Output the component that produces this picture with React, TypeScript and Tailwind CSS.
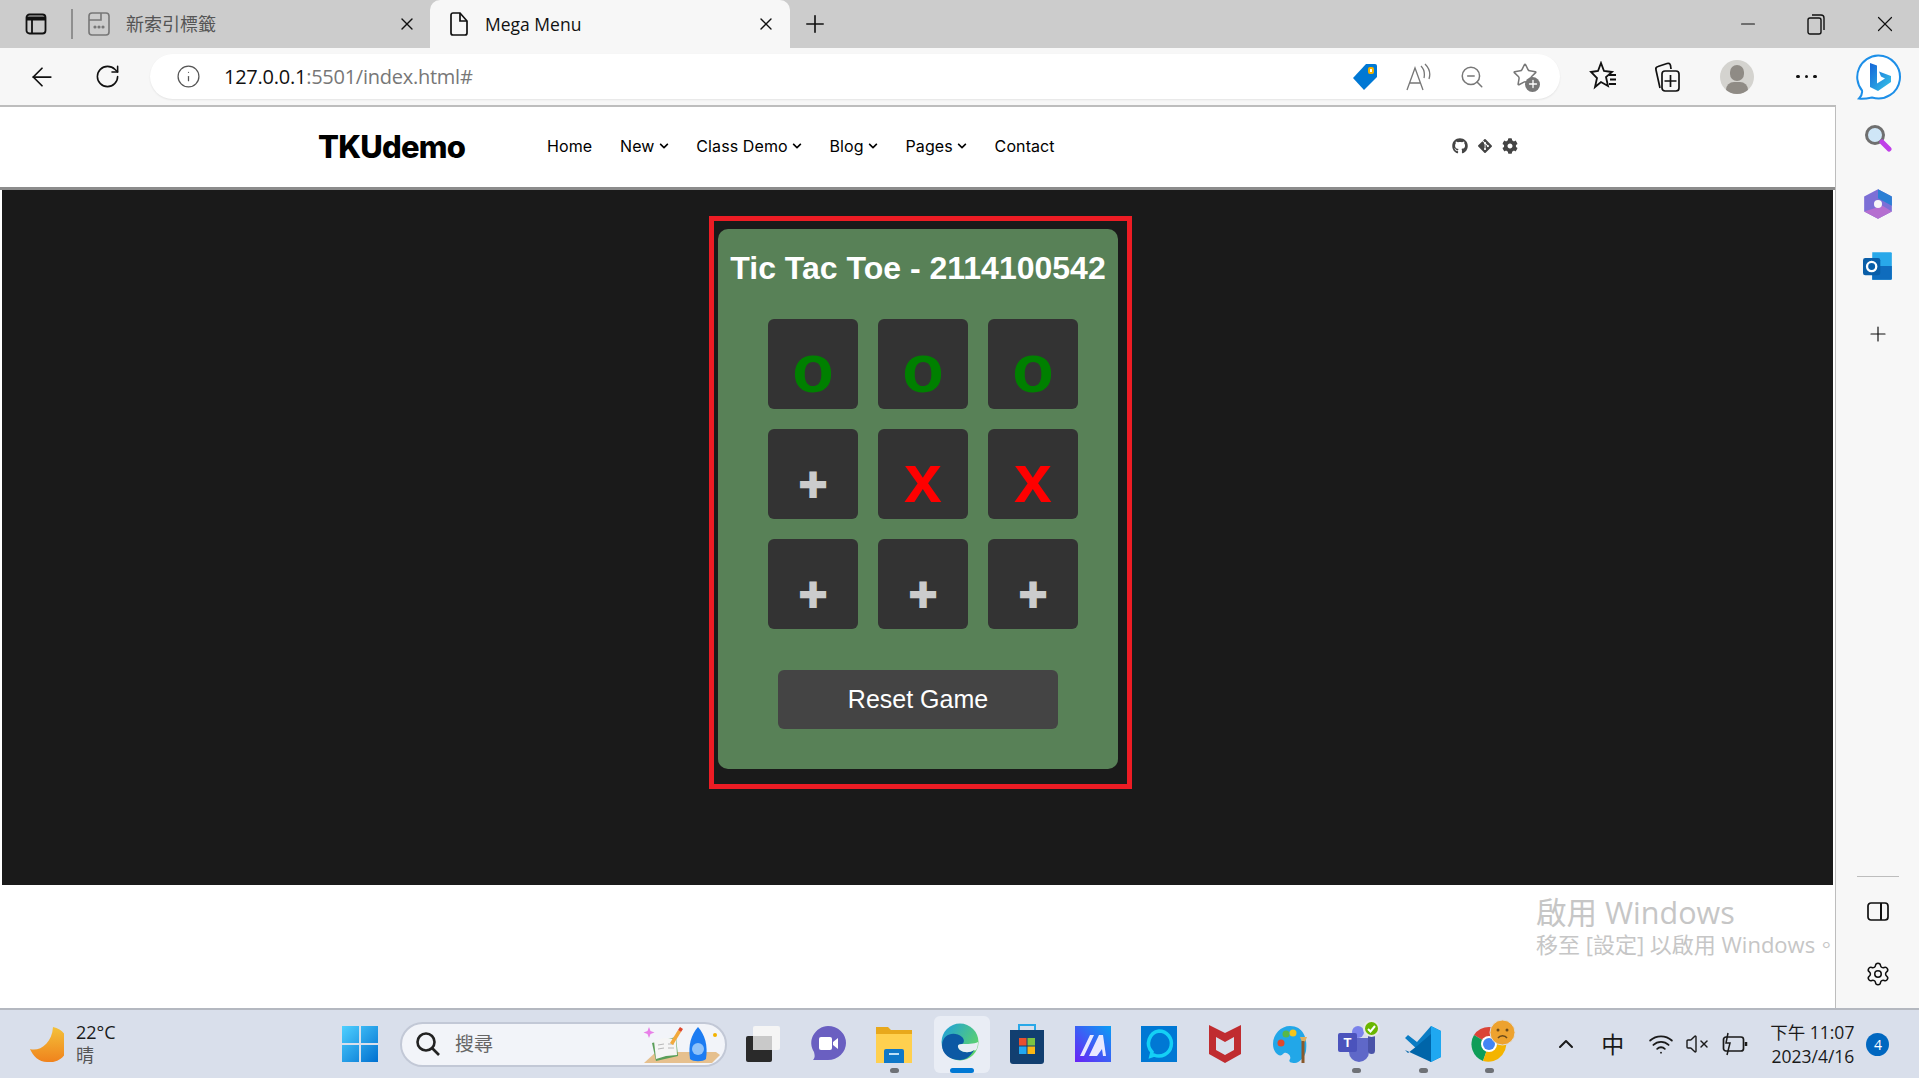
import { ArrowLeft, ChevronUp, Plus, RotateCw, Settings, Star, X, Minus, ZoomOut, Info, Wifi, VolumeX } from 'lucide-react';
import { FaChevronDown, FaCog, FaGitAlt, FaGithub } from 'react-icons/fa';

const cjk = 'font-["Open_Sans","Noto_Sans_CJK_TC",sans-serif]';

const board = ['O', 'O', 'O', '+', 'X', 'X', '+', '+', '+'];

const Cell = ({ value }: { value: string }) => {
    if (value === '+') {
        // the plus in the picture is chunkier than the font's bold, so it gets a stroke
        return <div className="h-[90px] rounded-[6px] bg-[#333333] text-center text-[48px] leading-[111px] font-bold text-[#cccccc] [-webkit-text-stroke:2px_#cccccc]">+</div>;
    }
    return (
        <div className={`h-[90px] rounded-[6px] bg-[#333333] text-center text-[68px] leading-[99px] font-bold ${value === 'O' ? 'text-[#008000]' : 'text-[#ff0000]'}`}>
            {value.toLowerCase()}
        </div>
    );
};

const TabStrip = () => (
    <div className={`flex h-[48px] items-center bg-[#cccccc] text-[#111111] ${cjk}`}>
        <div className="flex w-[71px] justify-center pl-[1px]">
            <svg width="22" height="22" viewBox="0 0 22 22" fill="none" stroke="#111" strokeWidth="1.8">
                <rect x="1.5" y="1.5" width="19" height="19" rx="3" />
                <path d="M1.5 5.5h19" strokeWidth="4" />
                <path d="M7 6v14" />
            </svg>
        </div>
        <div className="h-[30px] w-[2px] bg-[#8f8f8f]" />
        <div className="flex h-full w-[357px] items-center pl-[15px] text-[#555555]">
            <svg width="22" height="24" viewBox="0 0 22 24" fill="none" stroke="#777" strokeWidth="1.6">
                <rect x="1" y="1" width="20" height="22" rx="3" />
                <path d="M1 8h12V1" />
                <circle cx="7" cy="15" r="0.8" fill="#777" />
                <circle cx="11" cy="15" r="0.8" fill="#777" />
                <circle cx="15" cy="15" r="0.8" fill="#777" />
            </svg>
            <span className="ml-[16px] text-[18px]">新索引標籤</span>
            <X size={20} strokeWidth={1.6} className="ml-[181px] text-[#111]" />
        </div>
        <div className="flex h-full w-[360px] items-center rounded-t-[10px] bg-[#f7f7f7] pl-[20px]">
            <svg width="18" height="24" viewBox="0 0 18 24" fill="none" stroke="#111" strokeWidth="1.7">
                <path d="M3 1h7l7 8v12a2 2 0 0 1-2 2H3a2 2 0 0 1-2-2V3a2 2 0 0 1 2-2z" />
                <path d="M10 1v8h7" />
            </svg>
            <span className="ml-[17px] text-[17.500px]">Mega Menu</span>
            <X size={20} strokeWidth={1.6} className="ml-[175px]" />
        </div>
        <Plus size={28} strokeWidth={1.4} className="ml-[11px]" />
        <Minus size={22} strokeWidth={1.3} className="ml-[908px]" />
        <svg width="18" height="22" viewBox="0 0 18 22" fill="none" stroke="#111" strokeWidth="1.4" className="ml-[48px]">
            <rect x="1" y="5" width="13" height="16" rx="2" />
            <path d="M5 2h9a3 3 0 0 1 3 3v12" />
        </svg>
        <X size={26} strokeWidth={1.1} className="ml-[47px]" />
    </div>
);

const Toolbar = () => (
    <div className="flex h-[59px] items-start border-b-2 border-[#bdbdbd] bg-[#f7f7f7] pt-[6px] text-[#111111]">
        <div className="flex h-[45px] w-[150px] items-center">
            <ArrowLeft size={30} strokeWidth={1.4} className="ml-[27px]" />
            <RotateCw size={27} strokeWidth={1.4} className="ml-[37px]" />
        </div>
        <div className="flex h-[45px] w-[1410px] items-center rounded-full bg-white shadow-[0_1px_2px_rgba(0,0,0,0.08)]">
            <Info size={25} strokeWidth={1.2} className="ml-[26px] text-[#555555]" />
            <div className="ml-[23px] font-['Open_Sans',sans-serif] text-[20px] tracking-[-0.25px] text-[#777777]">
                <span className="text-[#111111]">127.0.0.1</span>:5501/index.html#
            </div>
            <div className="ml-auto flex items-center">
                <svg width="26" height="28" viewBox="0 0 26 28">
                    <path d="M14 1h9a2 2 0 0 1 2 2v11L12 27 1 15z" fill="#0078d4" />
                    <rect x="16" y="4" width="6" height="7" rx="2" fill="#f2b200" />
                    <rect x="18" y="6" width="2" height="3" fill="#fff" />
                </svg>
                <svg width="26" height="28" viewBox="0 0 26 28" fill="none" stroke="#777" strokeWidth="1.3" className="ml-[28px]">
                    <path d="M1 27 9 5l8 22M4 20h10" />
                    <path d="M15 3c3 3 4 7 3 12M19 1c4 4 6 9 4 15" />
                </svg>
                <ZoomOut size={26} strokeWidth={1.4} className="ml-[27px] text-[#777777]" />
                <div className="relative ml-[27px] h-[30px] w-[28px]">
                    <Star size={26} strokeWidth={1.4} className="text-[#777777]" />
                    <div className="absolute right-0 bottom-0 flex h-[15px] w-[15px] items-center justify-center rounded-full bg-[#777777]">
                        <Plus size={12} strokeWidth={2.6} className="text-white" />
                    </div>
                </div>
                <div className="w-[20px]" />
            </div>
        </div>
        <div className="flex h-[45px] items-center">
            <svg width="28" height="32" viewBox="0 0 28 32" fill="none" stroke="#111" strokeWidth="1.8" className="ml-[29px]">
                <path d="M12 2l3 8 8 1-6 5 2 9-7-4-6 5 2-9-6-6 7-1z" />
                <path d="M20 14h7M21 18.5h6M20 23h7" />
            </svg>
            <svg width="26" height="32" viewBox="0 0 26 32" fill="none" stroke="#111" strokeWidth="1.7" className="ml-[37px]">
                <path d="M6 27 2 9c-.5-2 0-3 2-3.500l9-3c2-.5 3 0 3.500 2L17 8" />
                <rect x="8" y="10" width="17" height="20" rx="3" />
                <path d="M16.500 14v12M10.500 20h12" />
            </svg>
            <div className="relative ml-[40px] h-[34px] w-[34px] overflow-hidden rounded-full bg-[#d4d3cf]">
                <div className="absolute top-[5px] left-[10px] h-[16px] w-[14px] rounded-full bg-[#8f8b85]" />
                <div className="absolute top-[22px] left-[6px] h-[16px] w-[22px] rounded-full bg-[#8f8b85]" />
            </div>
            <div className="ml-[42px] flex gap-[5px]">
                <div className="h-[3.500px] w-[3.500px] rounded-full bg-[#111111]" />
                <div className="h-[3.500px] w-[3.500px] rounded-full bg-[#111111]" />
                <div className="h-[3.500px] w-[3.500px] rounded-full bg-[#111111]" />
            </div>
        </div>
    </div>
);

const NavLink = ({ label, caret }: { label: string; caret?: boolean }) => (
    <div className="flex items-center gap-[4px] whitespace-nowrap">
        {label}
        {caret && <FaChevronDown size={10} />}
    </div>
);

const Header = () => (
    <div className="flex h-[83px] items-center border-b-[3px] border-[#8c8c8c] bg-white pl-[318px] text-black">
        <div className="w-[229px] font-['Inter',sans-serif] text-[31px] font-extrabold tracking-[-0.8px]">TKUdemo</div>
        <div className="mb-[2px] flex w-[905px] items-center gap-[27.800px] font-['Inter',sans-serif] text-[16px] tracking-[0.1px]">
            <NavLink label="Home" />
            <NavLink label="New" caret />
            <NavLink label="Class Demo" caret />
            <NavLink label="Blog" caret />
            <NavLink label="Pages" caret />
            <NavLink label="Contact" />
        </div>
        <div className="mb-[2px] flex items-center gap-[9px] text-[#444444]">
            <FaGithub size={16} />
            <FaGitAlt size={16} />
            <FaCog size={16} />
        </div>
    </div>
);

const Game = () => (
    <div className="mx-[2px] h-[695px] bg-[#1a1a1a] pt-[26px] pl-[707px] font-['Liberation_Sans',Arial,sans-serif]">
        <div className="w-[423px] border-[5px] border-[#ed1c24] pt-[8px] pb-[15px] pl-[4px]">
            <div className="h-[540px] w-[400px] rounded-[10px] bg-[#588157] pt-[21px]">
                <div className="text-center text-[32px] leading-[36px] font-bold text-white">Tic Tac Toe - 2114100542</div>
                <div className="mt-[33px] ml-[50px] grid w-[310px] grid-cols-3 gap-[20px]">
                    {board.map((v, i) => <Cell key={i} value={v} />)}
                </div>
                <div className="mt-[41px] ml-[60px] flex h-[59px] w-[280px] items-center justify-center rounded-[6px] bg-[#444444] text-[25px] text-white">
                    Reset Game
                </div>
            </div>
        </div>
    </div>
);

const Sidebar = () => (
    <div className="flex w-[83px] flex-col items-center bg-[#f7f7f7] pt-[6px]">
        <svg width="46" height="46" viewBox="0 0 46 46">
            <defs>
                <linearGradient id="bingB" x1="0" y1="0" x2="1" y2="1">
                    <stop offset="0" stopColor="#1565d8" />
                    <stop offset="1" stopColor="#37c6e8" />
                </linearGradient>
            </defs>
            <path d="M23 1.500a21.500 21.500 0 1 1-6 42c-4 .8-10 1.500-13 1 2-2 3.500-5 3-8A21.500 21.500 0 0 1 23 1.500z" fill="#fff" stroke="#1d8fe8" strokeWidth="2" />
            <path d="M15 9l7 2.500v18l8-5-4-2-2-5 12 4.500v6L23 37l-8-4z" fill="url(#bingB)" />
        </svg>
        <svg width="28" height="28" viewBox="0 0 28 28" className="mt-[24px]">
            <circle cx="11" cy="11" r="8.500" fill="#cfe6f7" stroke="#6f6f6f" strokeWidth="3" />
            <path d="M18 18l7 7" stroke="#c03fe8" strokeWidth="5" strokeLinecap="round" />
        </svg>
        <svg width="26" height="28" viewBox="0 0 26 28" preserveAspectRatio="none" className="mt-[36px] h-[32px] w-[30px]">
            <path d="M13 1l12 6.500v13L13 27 1 20.500v-13z" fill="#7c6fd6" />
            <path d="M13 1l12 6.500v8L13 9z" fill="#2b7fd4" />
            <path d="M1 20.500 13 27l12-6.500-8-5z" fill="#b56fd0" />
            <circle cx="13" cy="14" r="3.500" fill="#f7f7f7" />
        </svg>
        <svg width="30" height="30" viewBox="0 0 26 26" className="mt-[31px]">
            <path d="M8 1h16a1 1 0 0 1 1 1v22a1 1 0 0 1-1 1H8z" fill="#28a8ea" />
            <path d="M8 13h17v11a1 1 0 0 1-1 1H8z" fill="#0f6cbd" />
            <rect x="0" y="6" width="15" height="15" rx="2" fill="#0a5ea8" />
            <circle cx="7.500" cy="13.500" r="4" fill="none" stroke="#fff" strokeWidth="2" />
        </svg>
        <Plus size={24} strokeWidth={1.2} className="mt-[41px] text-[#111111]" />
        <div className="mt-[530px] h-[1px] w-[42px] bg-[#bdbdbd]" />
        <svg width="22" height="20" viewBox="0 0 22 20" fill="none" stroke="#111" strokeWidth="1.7" className="mt-[25px]">
            <rect x="1" y="1" width="20" height="17" rx="3" />
            <path d="M14 1v17" strokeWidth="2" />
        </svg>
        <Settings size={26} strokeWidth={1.4} className="mt-[39px] text-[#111111]" />
    </div>
);

const Slot = ({ dot, children }: { dot?: boolean; children: React.ReactNode }) => (
    <div className="relative flex h-full w-[66.100px] items-center justify-center">
        {children}
        {dot && <div className="absolute bottom-[5px] h-[5px] w-[9px] rounded-full bg-[#6e7176]" />}
    </div>
);

const Taskbar = () => (
    <div className={`flex h-[70px] items-center border-t-2 border-[#b4b8c0] bg-[#d9dfeb] text-[#1a1a1a] ${cjk}`}>
        <svg width="34" height="36" viewBox="0 0 34 36" className="ml-[30px]">
            <defs>
                <linearGradient id="moon" x1="0" y1="0" x2="0" y2="1">
                    <stop offset="0" stopColor="#f3c13a" />
                    <stop offset="1" stopColor="#f0821c" />
                </linearGradient>
            </defs>
            <path d="M23 1a17 17 0 0 1-6 35C9 36 3 30 0 23c9 3 22-5 23-22z" fill="url(#moon)" />
        </svg>
        <div className="ml-[12px] w-[251px] text-[18px] leading-[23px]">
            <div>22°C</div>
            <div className="text-[#555555]">晴</div>
        </div>
        <Slot>
            <svg width="36" height="36" viewBox="0 0 36 36">
                <defs>
                    <linearGradient id="win" x1="0" y1="0" x2="1" y2="1">
                        <stop offset="0" stopColor="#4fd0ff" />
                        <stop offset="1" stopColor="#0070d0" />
                    </linearGradient>
                </defs>
                <path d="M0 0h17v17H0zM19 0h17v17H19zM0 19h17v17H0zM19 19h17v17H19z" fill="url(#win)" />
            </svg>
        </Slot>
        <div className="mr-[2px] ml-[7px] flex h-[45px] w-[327px] items-center rounded-full border-2 border-[#c2c8d6] bg-[#f2f4f9] pl-[13px]">
            <svg width="26" height="26" viewBox="0 0 26 26" fill="none" stroke="#222" strokeWidth="2.6">
                <circle cx="11" cy="11" r="8.500" />
                <path d="M17 17l7 7" />
            </svg>
            <span className="ml-[14px] text-[19px] text-[#666666]">搜尋</span>
            <svg width="82" height="42" viewBox="0 0 82 42" className="ml-[147px]">
                <path d="M4 40l12-11h60l4 3-8 8z" fill="#e6c08e" />
                <path d="M12 20l24-6 2 19-22 5z" fill="#5a9e58" />
                <path d="M14 18l10-3 12 1 1 16-11 1-10 3z" fill="#f5f5f5" />
                <path d="M18 22l6-1M18 26l6-1M28 21l6 0M28 25l6 0" stroke="#b8b8b8" strokeWidth="1" />
                <path d="M30 20l8-13 3 2-8 13z" fill="#f2a93b" />
                <path d="M38 7l2-3 3 2-2 3z" fill="#e0482c" />
                <path d="M50 36c-2-14 1-24 8-32 7 8 10 18 8 32-3 3-13 3-16 0z" fill="#1c7cf2" />
                <circle cx="58" cy="26" r="6" fill="#8ec2fa" />
                <path d="M9 4l1.500 4 4 1.500-4 1.500-1.500 4-1.500-4-4-1.500 4-1.500z" fill="#e87fe8" />
                <circle cx="75" cy="12" r="2" fill="#f2b200" />
            </svg>
        </div>
        <Slot>
            <div className="relative h-[36px] w-[36px]">
                <div className="absolute top-0 right-[0px] h-[24px] w-[27px] rounded-[2px] bg-[#f5f5f5]" />
                <div className="absolute bottom-0 left-[2px] h-[26px] w-[26px] rounded-[2px] bg-[#2a2a2a]" />
                <div className="absolute top-[10px] right-[8px] h-[14px] w-[19px] bg-[#c9c9c9]" />
            </div>
        </Slot>
        <Slot>
            <svg width="36" height="36" viewBox="0 0 36 36">
                <path d="M18 0a18 17 0 0 1 0 34H3c2-2 2-4 1-8A18 17 0 0 1 18 0z" fill="#6a5fc1" />
                <rect x="9" y="11" width="13" height="13" rx="2" fill="#fff" />
                <path d="M23 16l5-4v11l-5-4z" fill="#fff" />
            </svg>
        </Slot>
        <Slot dot>
            <svg width="36" height="38" viewBox="0 0 36 38">
                <path d="M0 2h12l3 3h21v33H0z" fill="#e8a81c" />
                <rect x="0" y="9" width="36" height="29" fill="#ffd04f" />
                <path d="M10 24h16a2 2 0 0 1 2 2v12H8V26a2 2 0 0 1 2-2z" fill="#0f78c8" />
                <rect x="13" y="28" width="10" height="2" fill="#bde0f7" />
            </svg>
        </Slot>
        <div className="relative flex h-[57px] w-[66.100px] items-center justify-center">
            <div className="absolute left-[7px] h-[57px] w-[56px] rounded-[6px] bg-[#e9edf5]" />
            <svg width="38" height="38" viewBox="0 0 38 38" className="relative mb-[4px]">
                <defs>
                    <linearGradient id="edge" x1="0" y1="0" x2="1" y2="0.6">
                        <stop offset="0" stopColor="#1b9de2" />
                        <stop offset="1" stopColor="#5ed36a" />
                    </linearGradient>
                </defs>
                <circle cx="19" cy="19" r="18.500" fill="url(#edge)" />
                <path d="M1 22C2 10 14 8 21 14c3 3 2 6 0 7-5 0-5 3-2 6 4 3 10 3 14 0-3 6-8 10-14 10C9 37 1 31 1 22z" fill="#0c59a4" />
                <path d="M19 27c-3-3-3-6 2-6 5 0 12 0 16-2 0 6-2 10-4 8-4 3-10 3-14 0z" fill="#e9edf5" />
            </svg>
            <div className="absolute bottom-0 left-[23px] h-[5px] w-[24px] rounded-full bg-[#0078d4]" />
        </div>
        <Slot>
            <svg width="36" height="42" viewBox="0 0 36 42">
                <path d="M10 8V2h16v6" fill="none" stroke="#2aa8e8" strokeWidth="2" />
                <path d="M1 7h34v31a3 3 0 0 1-3 3H4a3 3 0 0 1-3-3z" fill="#123f70" />
                <rect x="10" y="15" width="7.500" height="7.500" fill="#e94f2e" />
                <rect x="18.500" y="15" width="7.500" height="7.500" fill="#7dc242" />
                <rect x="10" y="23.500" width="7.500" height="7.500" fill="#22a7f0" />
                <rect x="18.500" y="23.500" width="7.500" height="7.500" fill="#fcb714" />
            </svg>
        </Slot>
        <Slot>
            <svg width="36" height="36" viewBox="0 0 36 36">
                <defs>
                    <linearGradient id="mIcon" x1="1" y1="0" x2="0" y2="1">
                        <stop offset="0" stopColor="#0a9ef5" />
                        <stop offset="1" stopColor="#6b22f5" />
                    </linearGradient>
                </defs>
                <rect width="36" height="36" fill="url(#mIcon)" />
                <path d="M5 30 15 9h4L9 30zM14 30 24 9h4l3 21h-3l-1-7-5 7z" fill="#e8e8ff" />
            </svg>
        </Slot>
        <Slot>
            <svg width="36" height="36" viewBox="0 0 36 36">
                <rect width="36" height="36" fill="#0078d4" />
                <path d="M18 5a12.500 12.500 0 1 1-5 24l-3 1 1-4A12.500 12.500 0 0 1 18 5z" fill="none" stroke="#14d0f5" strokeWidth="3.500" />
            </svg>
        </Slot>
        <Slot>
            <svg width="32" height="38" viewBox="0 0 32 38">
                <path d="M0 0l16 8 16-8v29l-16 9L0 29z" fill="#c02c30" />
                <path d="M7 12l9 5 9-5v13l-9 5-9-5z" fill="#d9dfeb" />
            </svg>
        </Slot>
        <Slot>
            <svg width="36" height="38" viewBox="0 0 36 38">
                <path d="M17 1C8 1 0 9 0 19c0 9 7 14 10 10 3-4 9 2 7 5-2 3 1 4 5 4s10-6 11-12C35 13 30 1 17 1z" fill="#22a7e8" />
                <circle cx="8" cy="18" r="3.500" fill="#e0482c" />
                <circle cx="13" cy="9" r="3.500" fill="#58b848" />
                <circle cx="20" cy="8" r="3.500" fill="#f5c518" />
                <path d="M27 12h7l-2 5h-3z" fill="#e0b060" />
                <rect x="28.500" y="16" width="3" height="22" fill="#8a5a2c" />
            </svg>
        </Slot>
        <Slot dot>
            <div className="relative h-[40px] w-[38px]">
                <div className="absolute top-[2px] left-[14px] h-[12px] w-[12px] rounded-full bg-[#7b83eb]" />
                <div className="absolute top-[14px] left-[11px] h-[24px] w-[20px] rounded-b-[10px] bg-[#5f68c8]" />
                <div className="absolute top-[12px] left-[30px] h-[18px] w-[7px] rounded-b-[4px] bg-[#4a53a8]" />
                <div className="absolute top-[9px] left-0 flex h-[19px] w-[19px] items-center justify-center rounded-[2px] bg-[#4b53bc] font-['Liberation_Sans',sans-serif] text-[13px] font-bold text-white">T</div>
                <svg width="17" height="17" viewBox="0 0 17 17" className="absolute top-[-4px] right-[-4px]">
                    <circle cx="8.500" cy="8.500" r="7.500" fill="#6bb700" stroke="#e8e8e8" strokeWidth="2" />
                    <path d="M5 9l2.500 2.500L12 6" fill="none" stroke="#fff" strokeWidth="2" />
                </svg>
            </div>
        </Slot>
        <Slot dot>
            <svg width="36" height="36" viewBox="0 0 36 36">
                <path d="M26 0l10 5v26l-10 5L0 12l3-3 9 7z" fill="#0a7cc4" />
                <path d="M26 36 0 24l3 3 9-7 14-12z" fill="#0065a9" />
                <path d="M26 0l10 5v26l-10 5z" fill="#1fa8f1" />
            </svg>
        </Slot>
        <Slot dot>
            <div className="relative h-[36px] w-[36px]">
                <svg width="36" height="36" viewBox="0 0 36 36">
                    <path d="M18 18 3 9a18 18 0 0 1 30 0z" fill="#db4437" />
                    <path d="M18 18 3 9a18 18 0 0 0 9 26z" fill="#0f9d58" />
                    <path d="M18 18l15-9a18 18 0 0 1-21 26z" fill="#f4b400" />
                    <circle cx="18" cy="18" r="8" fill="#fff" />
                    <circle cx="18" cy="18" r="6" fill="#4285f4" />
                </svg>
                <svg width="27" height="27" viewBox="0 0 27 27" className="absolute top-[-7px] right-[-9px]">
                    <circle cx="13.500" cy="13.500" r="12.500" fill="#eda22f" stroke="#dddddd" />
                    <circle cx="9" cy="11" r="1.500" fill="#6b4a1a" />
                    <circle cx="18" cy="11" r="1.500" fill="#6b4a1a" />
                    <path d="M9 19c2-3 7-3 9 0" fill="none" stroke="#6b4a1a" strokeWidth="1.500" />
                </svg>
            </div>
        </Slot>
        <ChevronUp size={24} strokeWidth={2} className="ml-[32px]" />
        <span className="ml-[23px] text-[23px]">中</span>
        <Wifi size={26} strokeWidth={1.7} className="ml-[24px]" />
        <VolumeX size={24} strokeWidth={1.4} className="ml-[11px]" />
        <svg width="26" height="24" viewBox="0 0 26 24" fill="none" stroke="#1a1a1a" strokeWidth="1.7" className="ml-[13px]">
            <rect x="1.500" y="5" width="20" height="14" rx="2.500" />
            <path d="M24 10v4" strokeWidth="2.500" />
            <path d="M6 1 4 11h4L5 23" strokeWidth="1.500" />
        </svg>
        <div className="ml-[22px] text-right text-[17.500px] leading-[24px]">
            <div>下午 11:07</div>
            <div>2023/4/16</div>
        </div>
        <div className="ml-[12px] flex h-[23px] w-[23px] items-center justify-center rounded-full bg-[#0067c0] text-[14px] text-white">4</div>
    </div>
);

export default function App() {
    return (
        <div className="h-[1081px] w-[1919px] overflow-hidden bg-white">
            <TabStrip />
            <div className="flex h-[960px]">
                <div className="w-[1836px]">
                    <Toolbar />
                    <div className="border-r border-[#bdbdbd]">
                        <Header />
                        <Game />
                        <div className={`relative h-[123px] ${cjk}`}>
                            <div className="absolute top-[8px] left-[1536px] whitespace-nowrap text-[#c6c6c6]">
                                <div className="text-[30.500px] leading-[38px]">啟用 Windows</div>
                                <div className="text-[22px] leading-[26px]">移至 [設定] 以啟用 Windows。</div>
                            </div>
                        </div>
                    </div>
                </div>
                <Sidebar />
            </div>
            <Taskbar />
        </div>
    );
}
